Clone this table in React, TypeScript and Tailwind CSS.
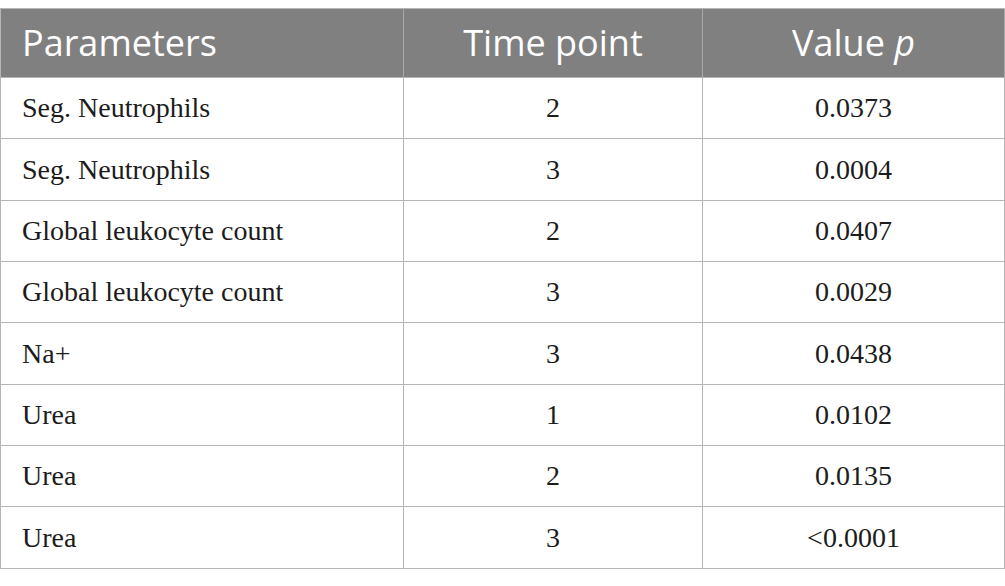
const rows = [
  { name: "Seg. Neutrophils", time: "2", p: "0.0373", h: "h-[61px]" },
  { name: "Seg. Neutrophils", time: "3", p: "0.0004", h: "h-[62px]" },
  { name: "Global leukocyte count", time: "2", p: "0.0407", h: "h-[61px]" },
  { name: "Global leukocyte count", time: "3", p: "0.0029", h: "h-[61px]" },
  { name: "Na+", time: "3", p: "0.0438", h: "h-[62px]" },
  { name: "Urea", time: "1", p: "0.0102", h: "h-[61px]" },
  { name: "Urea", time: "2", p: "0.0135", h: "h-[61px]" },
  { name: "Urea", time: "3", p: "<0.0001", h: "h-[62px]" },
];

const sans = "font-['Open_Sans',sans-serif]";
const serif = "font-['Liberation_Serif',serif]";

export default function App() {
  return (
    <div className="w-[1005px] h-[586px] bg-white pt-[8px]">
      <div className="border-b border-[#b5b5b5]">
        {/* Header */}
        <div className={`flex h-[69px] border-t border-[#b5b5b5] bg-[#808080] text-white text-[36px] ${sans}`}>
          <div className="w-[403px] flex items-center pl-[21px] border-l border-[#b5b5b5]">
            Parameters
          </div>
          <div className="w-[299px] flex items-center justify-center border-l border-[#a8a8a8]">
            Time point
          </div>
          <div className="flex-1 flex items-center justify-center border-l border-r border-[#a8a8a8]">
            Value&nbsp;<span className="italic">p</span>
          </div>
        </div>

        {/* Body rows */}
        {rows.map((r, i) => (
          <div
            key={i}
            className={`flex ${r.h} border-t border-[#b5b5b5] text-[28px] text-[#1c1c1c] ${serif}`}
          >
            <div className="w-[403px] flex items-center pl-[21px] border-l border-[#b5b5b5]">
              {r.name}
            </div>
            <div className="w-[299px] flex items-center justify-center border-l border-[#b5b5b5]">
              {r.time}
            </div>
            <div className="flex-1 flex items-center justify-center border-l border-r border-[#b5b5b5]">
              {r.p}
            </div>
          </div>
        ))}
      </div>
    </div>
  );
}
